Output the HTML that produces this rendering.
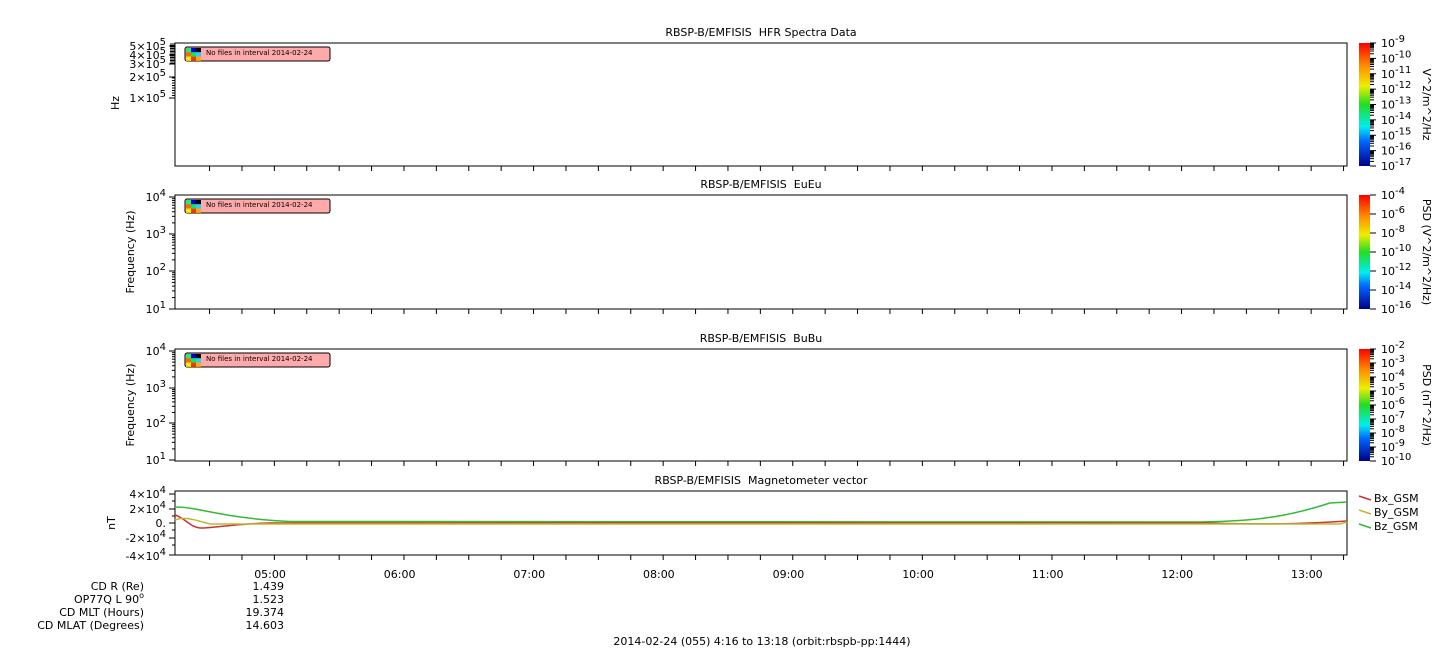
<!DOCTYPE html><html><head><style>body{margin:0;background:#fff}svg{display:block;font-family:"DejaVu Sans","Liberation Sans",sans-serif;font-size:11px}</style></head><body>
<svg id="s" width="1447" height="658" xmlns="http://www.w3.org/2000/svg">
<defs><linearGradient id="cb" x1="0" y1="0" x2="0" y2="1">
<stop offset="0" stop-color="#f00"/><stop offset="0.18" stop-color="#f80"/><stop offset="0.35" stop-color="#ee0"/><stop offset="0.5" stop-color="#2d2"/><stop offset="0.68" stop-color="#0ee"/><stop offset="0.8" stop-color="#06f"/><stop offset="1" stop-color="#008"/></linearGradient></defs>
<g id="g" fill="none" stroke="#000"></g>
<g id="t" fill="#000"></g>
</svg>
<script>
const g=document.getElementById('g'),t=document.getElementById('t');
let gs='',ts='';
function R(x,y,w,h){gs+=`<rect x="${x}" y="${y}" width="${w}" height="${h}"/>`}
function L(x1,y1,x2,y2,c){gs+=`<line x1="${x1}" y1="${y1}" x2="${x2}" y2="${y2}"${c?` stroke="${c}"`:''}/>`}
function T(x,y,s,a,ex){ts+=`<text x="${x}" y="${y}" text-anchor="${a||'start'}" ${ex||''}>${s}</text>`}
function P(x,y,b,e,a){ts+=`<text x="${x}" y="${y}" text-anchor="${a||'end'}">${b}<tspan dy="-5" font-size="10">${e}</tspan></text>`}
const panels=[[43,166,'RBSP-B/EMFISIS&#160; HFR Spectra Data'],[195,309,'RBSP-B/EMFISIS&#160; EuEu'],[349,461,'RBSP-B/EMFISIS&#160; BuBu'],[491,555,'RBSP-B/EMFISIS&#160; Magnetometer vector']];
const x0=175,x1=1347,pm=129.6/60;
panels.forEach(([a,b,tt],i)=>{R(x0,a,x1-x0,b-a);T(761,a-7,tt,'middle');
 for(let m=0;m<=542;m+=15){const x=x0+(m+16)*pm; if(x>x1)break; const mj=((m+16)%60)==0; if(x<x0)continue; L(x,b,x,b+(mj?8:5));}
 if(i<3){
  gs+=`<rect x="${x0+10}" y="${a+4}" width="145" height="14" rx="2" fill="#faa"/>`;
  const c=[['#2e6','#00c','#000'],['#f60','#0e6','#3cf'],['#ee0','#f30','#fa0']];
  c.forEach((r,ri)=>r.forEach((cc,ci)=>{gs+=`<rect x="${x0+11+ci*5}" y="${a+5+ri*4.3}" width="5" height="4.3" fill="${cc}" stroke="none"/>`}));
  ts+=`<text x="${x0+31}" y="${a+12}" font-size="7">No files in interval 2014-02-24</text>`;
  gs+=`<rect x="1359" y="${a}" width="11" height="${b-a}" fill="url(#cb)" stroke="none"/>`;
 }});
['05:00','06:00','07:00','08:00','09:00','10:00','11:00','12:00','13:00'].forEach((h,k)=>T(x0+(44+60*k)*pm,578,h,'middle'));
[[46,'5×10','5'],[55,'4×10','5'],[64,'3×10','5'],[77,'2×10','5'],[98,'1×10','5']].forEach(([y,b,e])=>P(166,y+4,b,e));
for(let y=44;y<65;y+=1.5)L(170,y,175,y);
[46,55,64,77,98].forEach(y=>L(169,y,175,y));
for(let y=78;y<98;y+=2.5)L(172,y,175,y);
ts+=`<text transform="translate(119,103) rotate(-90)" text-anchor="middle">Hz</text>`;
[[197,234,271,309],[351,388,423,460]].forEach((ys)=>{const ex=[4,3,2,1];ys.forEach((y,k)=>{P(166,y+4,'10',ex[k]);L(169,y,175,y)});
 for(let k=0;k<3;k++){for(let j=2;j<10;j++){const y=ys[k+1]-(ys[k+1]-ys[k])*Math.log10(j);L(172,y,175,y)}}});
ts+=`<text transform="translate(134,252) rotate(-90)" text-anchor="middle">Frequency (Hz)</text>`;
ts+=`<text transform="translate(134,405) rotate(-90)" text-anchor="middle">Frequency (Hz)</text>`;
[[494,'4×10','4'],[509,'2×10','4'],[538,'-2×10','4'],[556,'-4×10','4']].forEach(([y,b,e])=>P(166,y+4,b,e));
T(166,527,'0.','end');
[494,509,523,538,555].forEach(y=>L(169,y,175,y));[501,516,530,545].forEach(y=>L(172,y,175,y));
ts+=`<text transform="translate(115,523) rotate(-90)" text-anchor="middle">nT</text>`;
gs+=`<path d="M175 507 C200 507 220 518 290 521.5 L1200 522 C1260 521 1290 516 1330 503 L1347 502" stroke="#3b3" stroke-width="1.5"/>`;
gs+=`<path d="M175 515 C185 518 190 527 200 528 C215 528 230 524 270 523 L1200 523 C1250 524 1290 525 1347 521" stroke="#c33" stroke-width="1.5"/>`;
gs+=`<path d="M175 520 C185 516 195 520 210 524 L1340 524 L1347 522" stroke="#bb3" stroke-width="1.5"/>`;
[['#c33',499,'Bx_GSM'],['#bb3',513,'By_GSM'],['#3b3',527,'Bz_GSM']].forEach(([c,y,s])=>{gs+=`<line x1="1359" y1="${y-3}" x2="1371" y2="${y+1}" stroke="${c}" stroke-width="1.5"/>`;T(1374,y+3,s)});
function cbl(a,b,exps,lab,lx,dense){const n=exps.length-1;exps.forEach((e,k)=>{const y=a+(b-a)*k/n;P(1381,y+4,'10',e,'start');L(1370,y,1376,y);
 if(dense&&k<n){const d=(b-a)/n;for(let j=2;j<10;j++){const yy=y+d-d*Math.log10(j);L(1370,yy,1374,yy)}}});ts+=`<text transform="translate(${lx},${(a+b)/2}) rotate(90)" text-anchor="middle">${lab}</text>`}
cbl(43,166,[-9,-10,-11,-12,-13,-14,-15,-16,-17],'V^2/m^2/Hz',1423,1);
cbl(195,309,[-4,-6,-8,-10,-12,-14,-16],'PSD (V^2/m^2/Hz)',1423,0);
cbl(349,461,[-2,-3,-4,-5,-6,-7,-8,-9,-10],'PSD (nT^2/Hz)',1423,1);
[['CD R (Re)','1.439',590],['OP77Q L 90<tspan dy="-5" font-size="8">o</tspan>','1.523',603],['CD MLT (Hours)','19.374',616],['CD MLAT (Degrees)','14.603',629]].forEach(([l,v,y])=>{T(144,y,l,'end');T(284,y,v,'end')});
T(762,645,'2014-02-24 (055) 4:16 to 13:18 (orbit:rbspb-pp:1444)','middle');
g.innerHTML=gs;t.innerHTML=ts;
</script></body></html>
